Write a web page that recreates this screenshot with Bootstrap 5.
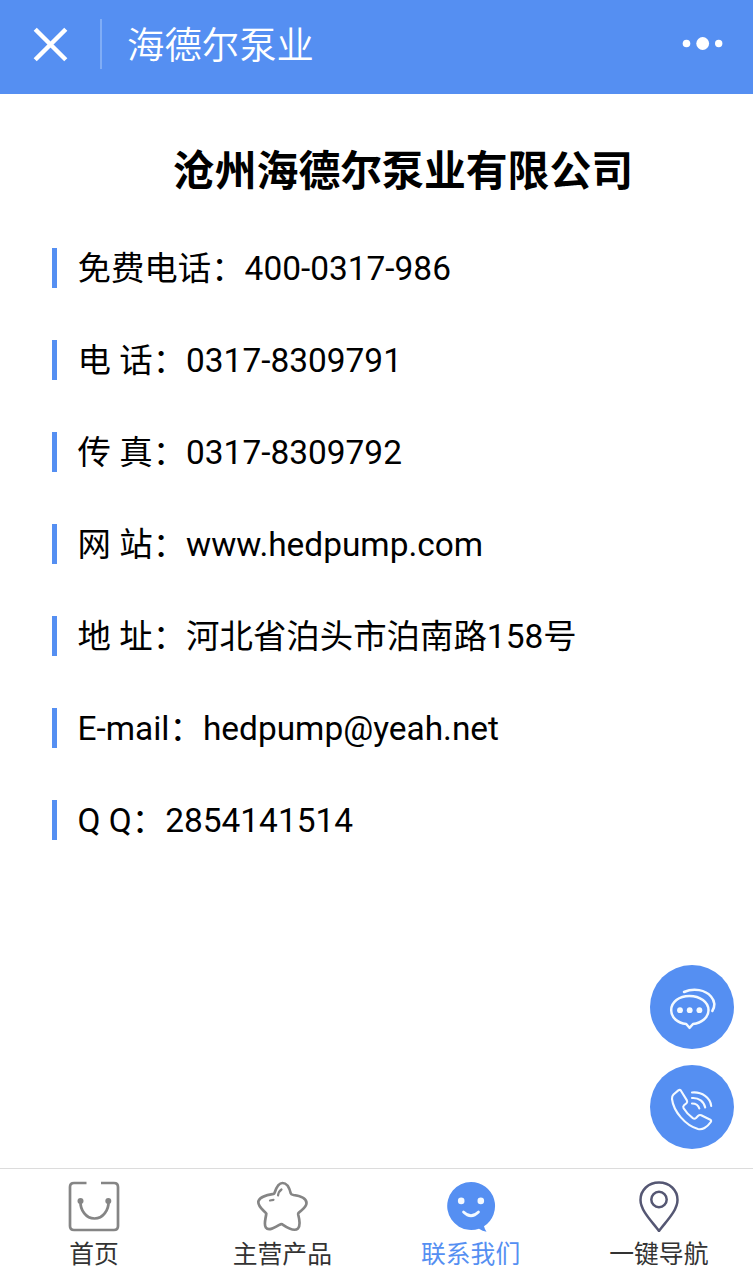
<!DOCTYPE html>
<html lang="zh-CN">
<head>
<meta charset="utf-8">
<meta name="viewport" content="width=device-width, initial-scale=1">
<title>海德尔泵业</title>
<link href="https://cdn.jsdelivr.net/npm/bootstrap@5.3.0/dist/css/bootstrap.min.css" rel="stylesheet">
<style>
  :root { --brand: #558ff2; }
  body { font-family: Roboto, "Noto Sans CJK SC", sans-serif; color: #000; height: 1280px; }
  .topbar { height: 94px; background: var(--brand); padding: 0 30px 6px 33px; }
  .topbar-rule { width: 2px; height: 50px; margin: 0 25px 0 32px; background: #80adf6; }
  .topbar-title { font-size: 37.4px; line-height: 50px; font-weight: 350; padding-top: 3px; }
  .company { font-size: 41.85px; line-height: 60px; font-weight: 700; margin: 48px 0 46px; padding-left: 53px; }
  .contact-list { padding-left: 52px; gap: 52px; }
  .contact-row { border-left: 5px solid var(--brand); padding-left: 20.5px; height: 40px; line-height: 42px; font-size: 33.43px; white-space: nowrap; }
  .float-actions { right: 19px; bottom: 131px; gap: 16px; }
  .float-btn { width: 84px; height: 84px; background: var(--brand); }
  .tabbar { height: 112px; border-top: 1px solid #dcdcdc; }
  .tab-link { color: #333; font-size: 24.8px; line-height: 30px; padding-top: 11px; }
  .tab-link.active { color: var(--brand); }
  .tab-link svg { margin-bottom: 8px; }
</style>
</head>
<body class="d-flex flex-column bg-white position-relative overflow-hidden">
<header class="topbar d-flex align-items-center text-white flex-shrink-0">
  <svg width="35" height="35" viewBox="0 0 35 35" stroke="#fff" stroke-width="4.4" fill="none" aria-label="关闭"><path d="M2.2 2.2 32.8 32.8M32.8 2.2 2.2 32.8"/></svg>
  <div class="topbar-rule"></div>
  <div class="topbar-title">海德尔泵业</div>
  <svg class="ms-auto" width="41" height="14" viewBox="0 0 41 14" fill="#fff"><circle cx="4.500" cy="6.500" r="3.800"/><circle cx="20.700" cy="6.500" r="6.400"/><circle cx="36.700" cy="6.500" r="3.700"/></svg>
</header>

<main class="flex-grow-1">
  <h1 class="company text-center">沧州海德尔泵业有限公司</h1>
  <div class="contact-list d-flex flex-column">
    <div class="contact-row">免费电话：400-0317-986</div>
    <div class="contact-row">电 话：0317-8309791</div>
    <div class="contact-row">传 真：0317-8309792</div>
    <div class="contact-row">网 站：www.hedpump.com</div>
    <div class="contact-row">地 址：河北省泊头市泊南路158号</div>
    <div class="contact-row">E-mail：hedpump@yeah.net</div>
    <div class="contact-row">Q Q：2854141514</div>
  </div>
</main>

<div class="float-actions position-absolute d-flex flex-column">
  <a class="float-btn rounded-circle d-block" href="#" aria-label="在线咨询">
    <svg class="d-block" width="84" height="84" viewBox="0 0 84 84" fill="none" stroke="#f3f9ff" stroke-width="2.500" stroke-linecap="round" stroke-linejoin="round">
      <path d="M39.500 31C50 31 58.500 37 58.500 45.200C58.500 52.600 51.500 58 43 59L39.500 62.800L36.200 59C27.500 58 21.200 52.600 21.200 45.200C21.200 37 29 31 39.500 31Z"/>
      <path d="M34 27C44 22.500 55.500 25 61 31.500C64.800 36 65 41.500 62.300 46"/>
      <g fill="#f3f9ff" stroke="none"><circle cx="30" cy="45.200" r="2.900"/><circle cx="39.700" cy="45.200" r="2.900"/><circle cx="49.400" cy="45.200" r="2.900"/></g>
    </svg>
  </a>
  <a class="float-btn rounded-circle d-block" href="#" aria-label="拨打电话">
    <svg class="d-block" width="84" height="84" viewBox="0 0 84 84" fill="none" stroke="#f3f9ff" stroke-width="2.100" stroke-linecap="round" stroke-linejoin="round">
      <path d="M30.800 25.500Q29.800 24.300 28.300 25.400L23.500 29.500Q21.800 31.200 22 34C23.500 46.500 35.500 60.500 48 64Q51.500 64.800 54.500 63Q58.500 60.500 60.800 57Q61.700 55.600 60.300 54.700L51.200 50.300Q49.500 49.600 48.200 50.800L46 53Q44.500 54.300 42.800 53.200C39 50.500 35.700 46.700 33.600 43.300Q32.700 41.500 34 40.300L36.500 38.200Q37.700 37 36.900 35.400Z"/>
      <path d="M42 27.500C52 26.500 60.500 33 61.200 41"/>
      <path d="M42 33C49 32.500 54 36.500 55.200 42.500"/>
      <path d="M42 38.500C46 38.500 48.500 40.500 49.300 43.500"/>
    </svg>
  </a>
</div>

<nav class="tabbar d-flex flex-shrink-0 bg-white text-center">
  <a class="tab-link d-flex flex-column align-items-center text-decoration-none col-3" href="#">
    <svg width="52" height="52" viewBox="0 0 52 52" fill="none" stroke="#858585" stroke-width="2.700"><path d="M18.500 3H6Q2 3 2 7V46Q2 50 6 50H46Q50 50 50 46V7Q50 3 46 3H33"/><path d="M12.500 21C12 30 18 38.500 26.500 38.500C35 38.500 41 30 40.500 21"/><g fill="#858585" stroke="none"><circle cx="12.500" cy="21" r="3"/><circle cx="40.300" cy="21" r="3"/></g></svg>
    <span>首页</span>
  </a>
  <a class="tab-link d-flex flex-column align-items-center text-decoration-none col-3" href="#">
    <svg width="52" height="52" viewBox="0 0 52 52" fill="none" stroke="#858585" stroke-width="2.700" stroke-linejoin="round" stroke-linecap="round"><path d="M26.500 3C31 3 33.500 8 34.800 13.500C35 14.500 36 14.700 37.500 15C44.500 16 50.500 18.500 50.500 23C50.500 27.500 45.500 30 42.500 33Q42 33.700 42.300 35C43.500 39.500 44.500 45.500 42 48.500C38 52 31 47.500 27 44.800Q25.500 43.500 23.500 44.800C19 47.500 12.500 51.500 9.800 47.500C7.500 44 9.800 38.500 10.300 33.500C7.500 30 1 26 2.500 21C4.500 16 12 15 17.500 14Q18.300 13.700 18.700 12.500C20.500 7 22.500 3 26.500 3Z"/><path d="M25.500 9.500Q22.500 11.500 22 15.500M14 20.500L17.500 19.800" stroke-width="2.200"/></svg>
    <span>主营产品</span>
  </a>
  <a class="tab-link active d-flex flex-column align-items-center text-decoration-none col-3" href="#" aria-current="page">
    <svg width="52" height="52" viewBox="0 0 52 52"><path fill="#558ff2" d="M26 2A24 24 0 0 1 39 46.200Q39.500 48.500 41.500 51.800Q37.500 51 34 48.700A24 24 0 1 1 26 2Z"/><circle cx="16.200" cy="20.900" r="3.300" fill="#f3f9ff"/><circle cx="35.800" cy="20.900" r="3.300" fill="#f3f9ff"/><path d="M18.500 32Q26 39.500 33.500 32" fill="none" stroke="#f3f9ff" stroke-width="2.700" stroke-linecap="round"/></svg>
    <span>联系我们</span>
  </a>
  <a class="tab-link d-flex flex-column align-items-center text-decoration-none col-3" href="#">
    <svg width="52" height="52" viewBox="0 0 52 52" fill="none" stroke="#555773" stroke-width="2.500" stroke-linejoin="round"><path d="M26 51C20 42.500 7.500 31 7.500 20C7.500 10 15.500 2.500 26 2.500C36.500 2.500 44.500 10 44.500 20C44.500 31 32 42.500 26 51Z"/><circle cx="26" cy="19.500" r="7.700"/></svg>
    <span>一键导航</span>
  </a>
</nav>
<script src="https://cdn.jsdelivr.net/npm/bootstrap@5.3.0/dist/js/bootstrap.bundle.min.js"></script>
</body>
</html>
